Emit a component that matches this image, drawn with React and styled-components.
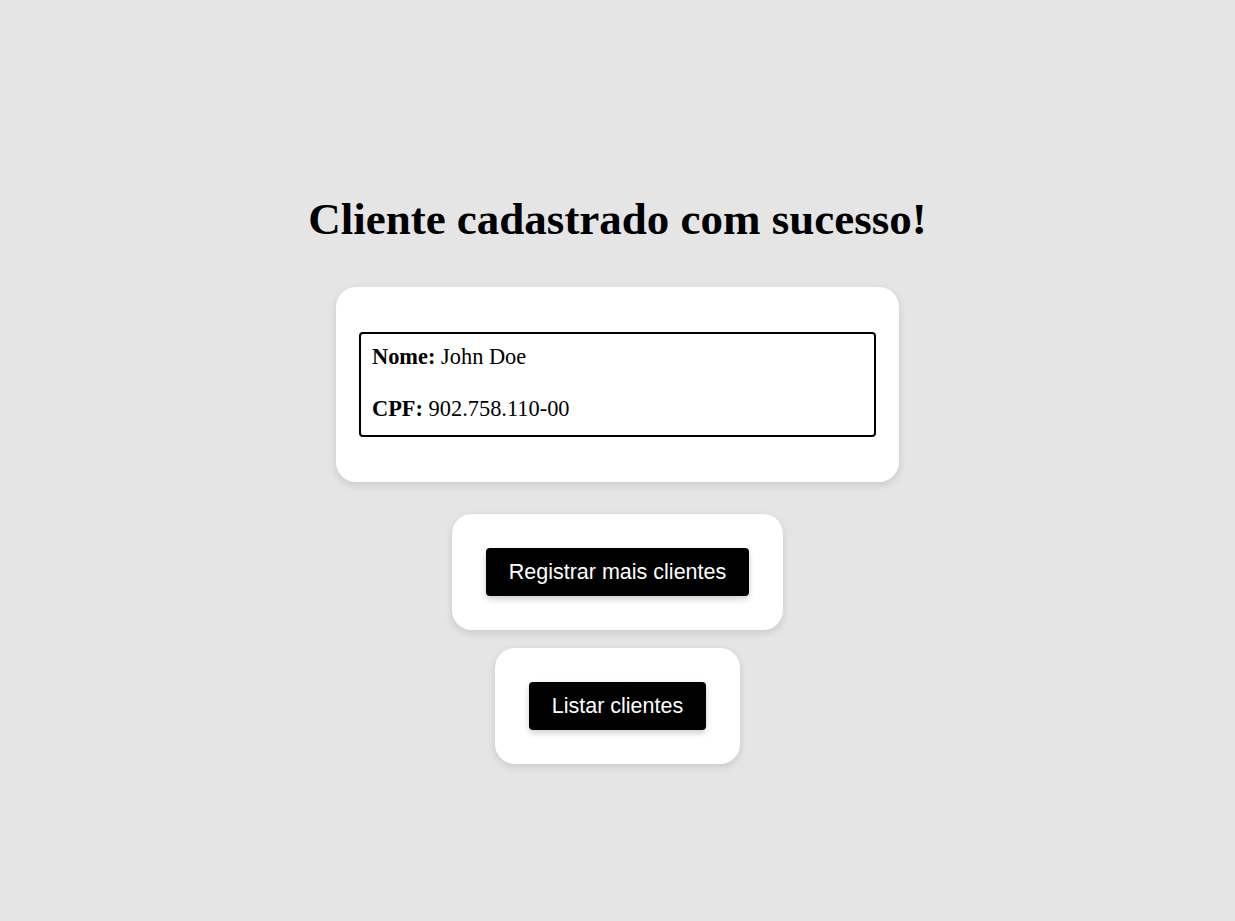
import React from "react"
import styled, { createGlobalStyle } from "styled-components";

const GlobalStyle = createGlobalStyle`
  body {
    margin: 0;
    background-color: #e5e5e5;
    font-family: "Liberation Serif", "Times New Roman", serif;
  }
`;

const Container = styled.div`
  min-height: 100vh;
  display: flex;
  flex-direction: column;
  align-items: center;
  padding-top: 193px;
  box-sizing: border-box;
`;

const Title = styled.h1`
  margin: 0 0 41px;
  font-size: 45px;
  font-weight: 700;
  line-height: 53px;
  color: #000;
`;

const Card = styled.div`
  background-color: white;
  border-radius: 20px;
  box-shadow: 0 3px 8px rgba(0, 0, 0, 0.12);
  padding: ${(p) => p.$padding || "34px"};
  margin-bottom: ${(p) => p.$gap || "18px"};
  box-sizing: border-box;
`;

const InfoBox = styled.div`
  width: 517px;
  height: 105px;
  box-sizing: border-box;
  border: 2px solid black;
  border-radius: 4px;
  padding: 10px 11px 0;
  display: flex;
  flex-direction: column;
  gap: 26px;
`;

const Line = styled.div`
  font-size: 22.4px;
  line-height: 26px;
  color: #000;
`;

const Button = styled.button`
  background-color: black;
  color: white;
  border: none;
  border-radius: 4px;
  padding: 12px 23px;
  font-family: "Liberation Sans", Arial, sans-serif;
  font-size: 21.5px;
  line-height: 24px;
  cursor: pointer;
  box-shadow: 0 3px 6px rgba(0, 0, 0, 0.2);
  display: block;
`;

const App = () => {
  const cliente = { nome: "John Doe", cpf: "902.758.110-00" }

  return (
    <>
      <GlobalStyle />
      <Container>
        <Title>Cliente cadastrado com sucesso!</Title>
        <Card $padding="45px 23px" $gap="32px">
          <InfoBox>
            <Line><b>Nome:</b> {cliente.nome}</Line>
            <Line><b>CPF:</b> {cliente.cpf}</Line>
          </InfoBox>
        </Card>
        <Card>
          <Button>Registrar mais clientes</Button>
        </Card>
        <Card>
          <Button>Listar clientes</Button>
        </Card>
      </Container>
    </>
  )
}
export default App
